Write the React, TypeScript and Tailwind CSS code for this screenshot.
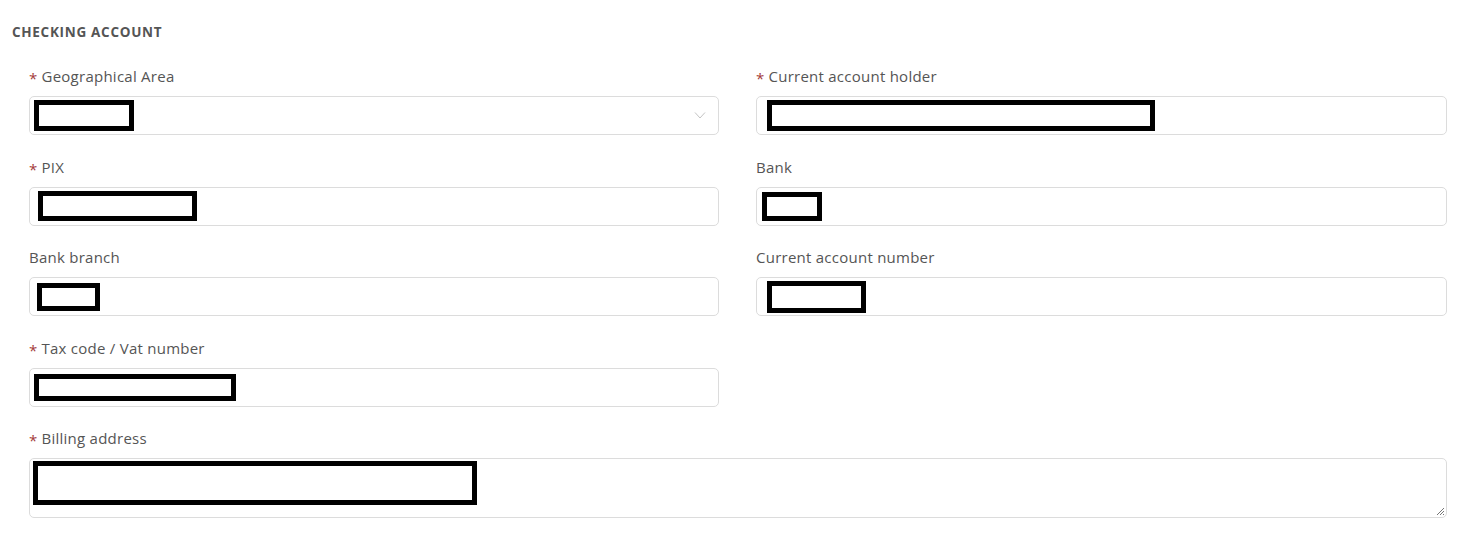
import React from 'react';

type Field = {
  label: string;
  required?: boolean;
  box: { ml: string; w: string; h: string };
  select?: boolean;
};

const rows: [Field, Field | null][] = [
  [
    { label: 'Geographical Area', required: true, select: true, box: { ml: 'ml-[4px]', w: 'w-[100px]', h: 'h-[31px]' } },
    { label: 'Current account holder', required: true, box: { ml: 'ml-[10px]', w: 'w-[388px]', h: 'h-[31px]' } },
  ],
  [
    { label: 'PIX', required: true, box: { ml: 'ml-[8px]', w: 'w-[159px]', h: 'h-[30px]' } },
    { label: 'Bank', box: { ml: 'ml-[5px]', w: 'w-[60px]', h: 'h-[29px]' } },
  ],
  [
    { label: 'Bank branch', box: { ml: 'ml-[7px]', w: 'w-[63px]', h: 'h-[28px]' } },
    { label: 'Current account number', box: { ml: 'ml-[10px]', w: 'w-[99px]', h: 'h-[32px]' } },
  ],
  [
    { label: 'Tax code / Vat number', required: true, box: { ml: 'ml-[4px]', w: 'w-[202px]', h: 'h-[27px]' } },
    null,
  ],
];

function Label({ text, required }: { text: string; required?: boolean }) {
  return (
    <div className="flex items-center h-5 text-[15px] leading-5 tracking-[0.25px] text-[#555]">
      {required && <span className="text-[#a33a3a] mr-[4px] text-[15px] translate-y-[2px]">*</span>}
      <span>{text}</span>
    </div>
  );
}

function Input({ field }: { field: Field }) {
  return (
    <div className="mt-[10px] h-[39px] border border-[#dcdcdc] rounded-[5px] bg-white flex items-center relative">
      <div className={`${field.box.ml} ${field.box.w} ${field.box.h} border-[5px] border-black`} />
      {field.select && (
        <svg className="absolute right-[12px] top-[14px]" width="12" height="9" viewBox="0 0 12 9" fill="none">
          <path d="M1 1.5 L6 7 L11 1.5" stroke="#c4c4c4" strokeWidth="1" />
        </svg>
      )}
    </div>
  );
}

export default function App() {
  return (
    <div className="w-[1471px] h-[558px] bg-white font-['Open_Sans',sans-serif]">
      <div className="pt-[24px] pl-[12px]">
        <h2 className="text-[13.5px] leading-4 font-bold tracking-[0.7px] text-[#555]">CHECKING ACCOUNT</h2>
      </div>
      <div className="pl-[29px] pr-[24px] pt-[26px]">
        {rows.map((row, i) => (
          <div key={i} className="grid grid-cols-[690px_1fr] gap-x-[37px] mb-[21.5px]">
            {row.map((f, j) =>
              f ? (
                <div key={j}>
                  <Label text={f.label} required={f.required} />
                  <Input field={f} />
                </div>
              ) : (
                <div key={j} />
              )
            )}
          </div>
        ))}
        <div>
          <Label text="Billing address" required />
          <div className="mt-[10px] h-[60px] border border-[#dcdcdc] rounded-[5px] bg-white relative">
            <div className="mt-[2px] ml-[3px] w-[444px] h-[44px] border-[5px] border-black" />
            <svg className="absolute right-[1px] bottom-[1px]" width="10" height="10" viewBox="0 0 10 10">
              <path d="M9 2 L2 9 M9 5 L5 9 M9 8 L8 9" stroke="#777" strokeWidth="1" />
            </svg>
          </div>
        </div>
      </div>
    </div>
  );
}
